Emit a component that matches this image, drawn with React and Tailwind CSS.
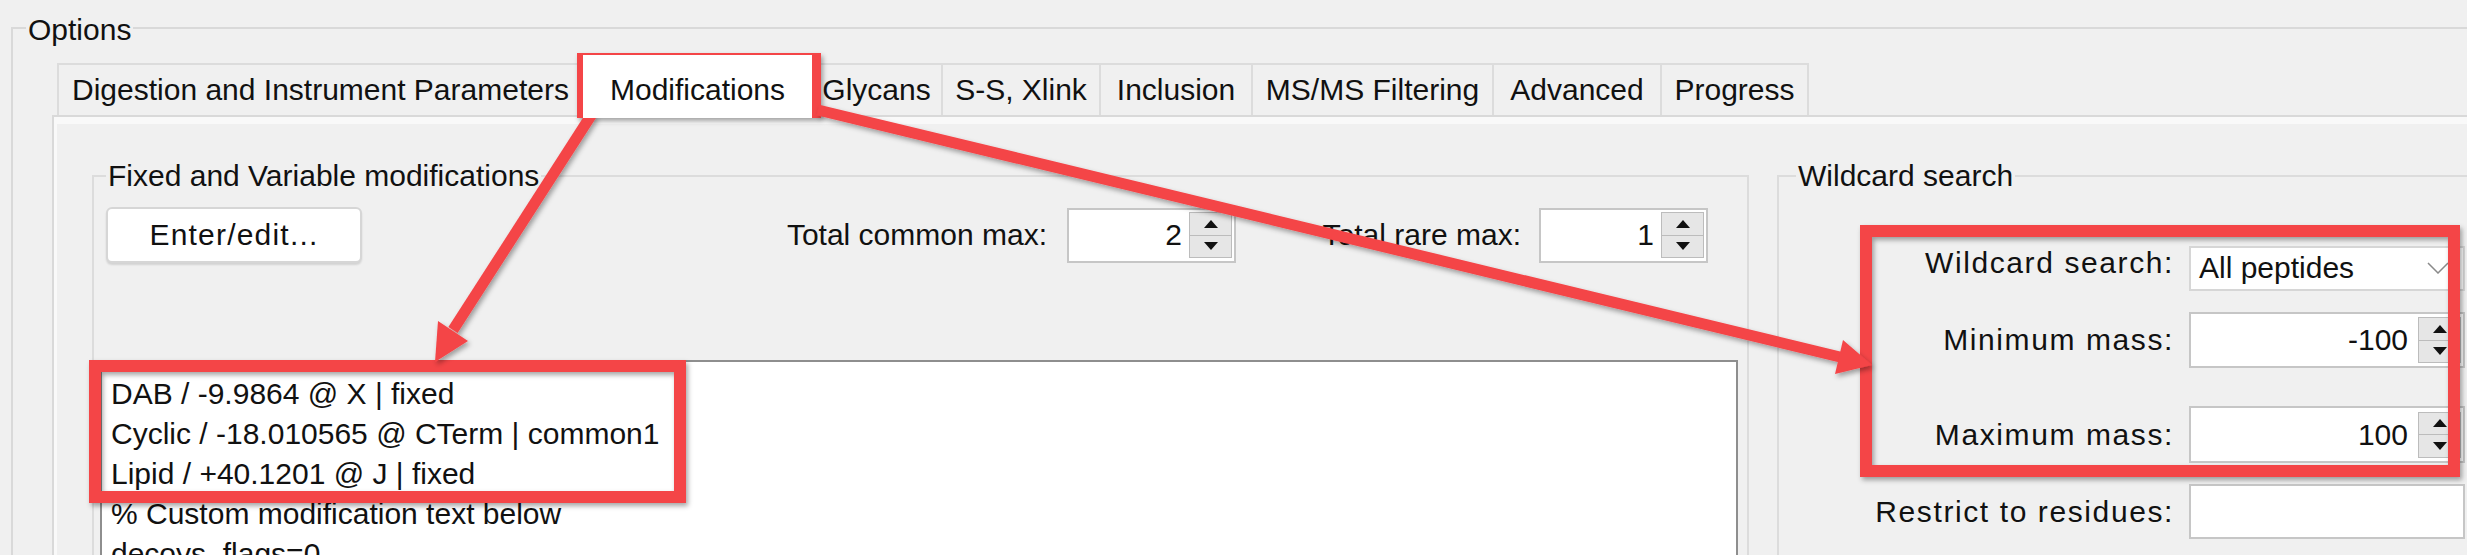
import React from "react";

function Tri({ up }) {
  return (
    <svg width="14" height="8" viewBox="0 0 14 8">
      <polygon points={up ? "0,8 7,0 14,8" : "0,0 14,0 7,8"} fill="#111" />
    </svg>
  );
}

function SpinButtons() {
  return (
    <div className="flex h-[46px] w-[43px] flex-col">
      <div className="flex flex-1 items-center justify-center border border-[#bcbcbc] bg-[#e6e6e6]">
        <Tri up />
      </div>
      <div className="flex flex-1 items-center justify-center border border-t-0 border-[#bcbcbc] bg-[#e6e6e6]">
        <Tri />
      </div>
    </div>
  );
}

function Tab({ label, w, first, left }) {
  return (
    <div
      className={
        "flex h-[52px] items-center overflow-hidden whitespace-nowrap border-r-2 border-t-2 border-[#dcdcdc] bg-[#f0f0f0] " +
        w +
        (first ? " border-l-2" : "") +
        (left ? " justify-start pl-[13px]" : " justify-center")
      }
    >
      {label}
    </div>
  );
}

export default function App() {
  const red = "#f44447";
  return (
    <div className="relative h-[555px] w-[2467px] overflow-hidden bg-[#f0f0f0] font-['Liberation_Sans',Arial,sans-serif] text-[30px] leading-[36px] text-[#111]">
      <div className="h-full pl-[11px] pt-[27px]">
        {/* Options group */}
        <div className="relative h-full border-l-2 border-t-2 border-[#d9d9d9]">
          <span className="absolute -top-[17px] left-[13px] bg-[#f0f0f0] px-[2px]">Options</span>
          <div className="flex h-full flex-col pl-[39px] pt-[34px]">
            {/* tab bar */}
            <div className="flex h-[52px] items-end pl-[5px]">
              <Tab label="Digestion and Instrument Parameters" w="w-[528px]" first left />
              <div className="relative z-10 -mb-[3px] -ml-[2px] flex h-[63px] w-[229px] items-center justify-center whitespace-nowrap bg-white pt-[6px]">
                Modifications
              </div>
              <Tab label="Glycans" w="w-[131px]" />
              <Tab label="S-S, Xlink" w="w-[158px]" />
              <Tab label="Inclusion" w="w-[152px]" />
              <Tab label="MS/MS Filtering" w="w-[241px]" />
              <Tab label="Advanced" w="w-[168px]" />
              <Tab label="Progress" w="w-[147px]" />
            </div>
            {/* pane */}
            <div className="flex flex-1 border-l-2 border-t-2 border-[#d9d9d9] pl-[38px] pt-[58px] shadow-[inset_3px_7px_0_0_#f9f9f9]">
              {/* Fixed and Variable modifications group */}
              <div className="relative h-full w-[1657px] border-l-2 border-r-2 border-t-2 border-[#dcdcdc]">
                <span className="absolute -top-[19px] left-[12px] whitespace-nowrap bg-[#f0f0f0] px-[2px]">
                  Fixed and Variable modifications
                </span>
                <div className="pt-[30px]">
                  <div className="flex items-center pl-[12px] pr-[39px]">
                    <div className="flex h-[56px] w-[256px] items-center justify-center rounded-[6px] border-2 border-[#d6d6d6] bg-white tracking-[1.2px] shadow-[0_2px_2px_rgba(0,0,0,0.12)]">
                      Enter/edit...
                    </div>
                    <div className="ml-auto whitespace-nowrap text-right">Total common max:</div>
                    <div className="ml-[20px] flex h-[55px] w-[169px] items-center border-2 border-[#c6c6c6] bg-white pr-[2px]">
                      <div className="flex-1 pr-[7px] text-right">2</div>
                      <SpinButtons />
                    </div>
                    <div className="w-[285px] whitespace-nowrap text-right">Total rare max:</div>
                    <div className="ml-[18px] flex h-[55px] w-[169px] items-center border-2 border-[#c6c6c6] bg-white pr-[2px]">
                      <div className="flex-1 pr-[7px] text-right">1</div>
                      <SpinButtons />
                    </div>
                  </div>
                  <div className="ml-[6px] mr-[9px] mt-[97px] h-[300px] whitespace-nowrap border-2 border-[#8e8e8e] bg-white pl-[9px] pt-[12px] leading-[40px]">
                    <div>DAB / -9.9864 @ X | fixed</div>
                    <div>Cyclic / -18.010565 @ CTerm | common1</div>
                    <div>Lipid / +40.1201 @ J | fixed</div>
                    <div>% Custom modification text below</div>
                    <div>decoys_flags=0</div>
                  </div>
                </div>
              </div>
              {/* Wildcard search group */}
              <div className="relative ml-[28px] h-full flex-1 border-l-2 border-t-2 border-[#dcdcdc]">
                <span className="absolute -top-[19px] left-[17px] whitespace-nowrap bg-[#f0f0f0] px-[2px]">
                  Wildcard search
                </span>
                <div className="flex flex-col pt-[68px]">
                  <div className="flex items-center">
                    <div className="mb-[10px] w-[395px] whitespace-nowrap text-right tracking-[1.6px]">Wildcard search:</div>
                    <div className="ml-[15px] flex h-[45px] w-[276px] items-center border-2 border-[#d6d6d6] bg-white pl-[8px] pr-[14px]">
                      <span className="flex-1 whitespace-nowrap">All peptides</span>
                      <svg width="22" height="12" viewBox="0 0 22 12">
                        <polyline points="1,1 11,11 21,1" fill="none" stroke="#8a8a8a" strokeWidth="1.5" />
                      </svg>
                    </div>
                  </div>
                  <div className="mt-[21px] flex items-center">
                    <div className="w-[395px] whitespace-nowrap text-right tracking-[1.6px]">Minimum mass:</div>
                    <div className="ml-[15px] flex h-[56px] w-[276px] items-center border-2 border-[#c6c6c6] bg-white pr-[2px]">
                      <div className="flex-1 pr-[10px] text-right">-100</div>
                      <SpinButtons />
                    </div>
                  </div>
                  <div className="mt-[38px] flex items-center">
                    <div className="w-[395px] whitespace-nowrap text-right tracking-[1.6px]">Maximum mass:</div>
                    <div className="ml-[15px] flex h-[57px] w-[276px] items-center border-2 border-[#c6c6c6] bg-white pr-[2px]">
                      <div className="flex-1 pr-[10px] text-right">100</div>
                      <SpinButtons />
                    </div>
                  </div>
                  <div className="mt-[21px] flex items-center">
                    <div className="w-[395px] whitespace-nowrap text-right tracking-[1.6px]">Restrict to residues:</div>
                    <div className="ml-[15px] h-[55px] w-[276px] border-2 border-[#c6c6c6] bg-white" />
                  </div>
                </div>
              </div>
            </div>
          </div>
        </div>
      </div>

      {/* annotation overlay */}
      <svg className="pointer-events-none absolute left-0 top-0" width="2467" height="555" viewBox="0 0 2467 555">
        <defs>
          <filter id="sh" filterUnits="userSpaceOnUse" x="0" y="0" width="2467" height="555">
            <feDropShadow dx="2" dy="3" stdDeviation="2.5" floodColor="#000" floodOpacity="0.35" />
          </filter>
        </defs>
        <g filter="url(#sh)" fill="none" stroke={red} strokeWidth="12">
          <rect x="583" y="59" width="232" height="53" />
          <rect x="95" y="366" width="585" height="131" />
          <rect x="1866" y="231" width="588" height="240" />
        </g>
        <g filter="url(#sh)" fill={red}>
          <line x1="592" y1="114" x2="453" y2="330" stroke={red} strokeWidth="11" />
          <polygon points="438,321 468,341 435,362" />
          <line x1="818" y1="110" x2="1840" y2="357" stroke={red} strokeWidth="11" />
          <polygon points="1843,340 1835,374 1872,365" />
        </g>
      </svg>
    </div>
  );
}
